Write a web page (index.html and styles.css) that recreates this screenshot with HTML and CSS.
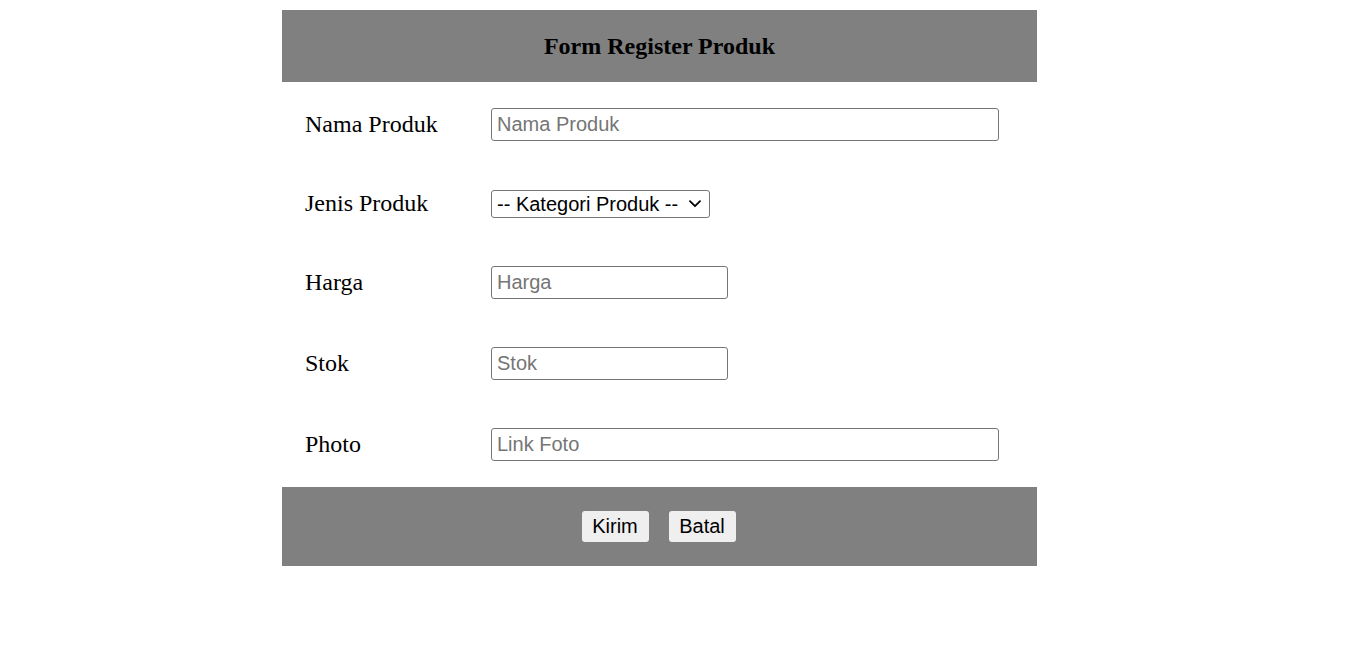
FILE: index.html
```html
<!DOCTYPE html>
<html lang="id">
<head>
<meta charset="utf-8">
<title>Form Register Produk</title>
<link rel="stylesheet" href="styles.css">
</head>
<body>
<form class="card">
  <header class="card-head">Form Register Produk</header>
  <div class="fields">
    <label class="label" for="nama">Nama Produk</label>
    <div class="control"><input class="input input-wide" id="nama" type="text" placeholder="Nama Produk"></div>

    <label class="label" for="jenis">Jenis Produk</label>
    <div class="control">
      <span class="select-wrap">
        <select class="select" id="jenis">
          <option>-- Kategori Produk --</option>
        </select>
        <svg class="chevron" width="12" height="8" viewBox="0 0 12 8" aria-hidden="true">
          <path d="M1 1.2 L6 6.2 L11 1.2" fill="none" stroke="#000" stroke-width="1.8" stroke-linecap="round" stroke-linejoin="round"/>
        </svg>
      </span>
    </div>

    <label class="label" for="harga">Harga</label>
    <div class="control"><input class="input input-short" id="harga" type="text" placeholder="Harga"></div>

    <label class="label" for="stok">Stok</label>
    <div class="control"><input class="input input-short" id="stok" type="text" placeholder="Stok"></div>

    <label class="label" for="photo">Photo</label>
    <div class="control control-last"><input class="input input-wide" id="photo" type="text" placeholder="Link Foto"></div>
  </div>
  <footer class="card-foot">
    <button class="btn" type="submit">Kirim</button>
    <button class="btn" type="reset">Batal</button>
  </footer>
</form>
</body>
</html>
```

FILE: styles.css
```css
html, body {
  margin: 0;
  padding: 0;
  background: #ffffff;
}

body {
  font-family: "Liberation Serif", "Times New Roman", serif;
  color: #000;
}

.card {
  width: 755px;
  margin: 10px 0 0 282px;
  display: flex;
  flex-direction: column;
}

.card-head {
  height: 72px;
  background: #808080;
  display: flex;
  align-items: center;
  justify-content: center;
  font-weight: bold;
  font-size: 24px;
}

.fields {
  display: grid;
  grid-template-columns: 209px 1fr;
  grid-template-rows: 85px 74px 83px 79px 84px;
  align-items: center;
}

.label {
  padding-left: 23px;
  font-size: 24px;
  line-height: 28px;
  margin-top: -2px;
}

.control {
  display: flex;
  align-items: center;
}

.control-last {
  margin-top: -2px;
}

.input {
  box-sizing: border-box;
  height: 33px;
  border: 1px solid #767676;
  border-radius: 3px;
  padding: 0 5px;
  font-family: "Liberation Sans", Arial, sans-serif;
  font-size: 20px;
  color: #000;
  background: #fff;
  margin: 0;
}

.input::placeholder {
  color: #757575;
}

.input-wide {
  width: 508px;
}

.input-short {
  width: 237px;
}

.select-wrap {
  position: relative;
  display: inline-flex;
}

.select {
  appearance: none;
  -webkit-appearance: none;
  box-sizing: border-box;
  height: 28px;
  width: 219px;
  border: 1px solid #767676;
  border-radius: 3px;
  font-family: "Liberation Sans", Arial, sans-serif;
  font-size: 20px;
  color: #000;
  background: #fff;
  padding: 0 0 0 5px;
  margin: 0;
}

.chevron {
  position: absolute;
  left: 198px;
  top: 10px;
  pointer-events: none;
}

.card-foot {
  height: 79px;
  background: #808080;
  display: flex;
  align-items: center;
  justify-content: center;
  gap: 20px;
  padding-right: 2px;
}

.btn {
  box-sizing: border-box;
  height: 31px;
  width: 67px;
  padding: 0;
  background: #efefef;
  border: none;
  border-radius: 3px;
  font-family: "Liberation Sans", Arial, sans-serif;
  font-size: 20px;
  color: #000;
}
```
